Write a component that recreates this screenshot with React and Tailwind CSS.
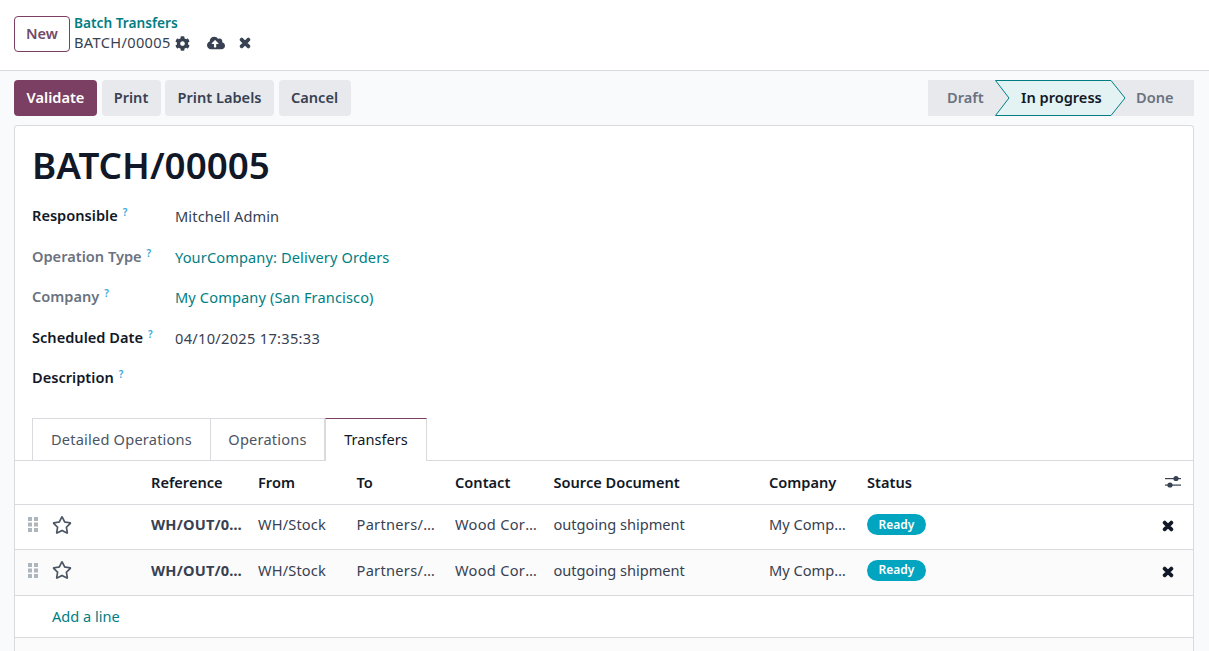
import React from "react";
import { FaCog, FaCloudUploadAlt, FaTimes, FaRegStar } from "react-icons/fa";

const grid = "grid grid-cols-[136px_107px_98.5px_98.5px_98.5px_215.5px_98px_1fr_50px] items-center";

const Help = () => (
  <sup className="relative -top-[5px] ml-[5px] text-[10px] font-semibold text-[#38a9d6]">?</sup>
);

function Field({ label, muted, value, link, wide }) {
  return (
    <div className="flex h-[40.6px] items-start pl-[17px]">
      <div className={`w-[143px] shrink-0 font-semibold ${muted ? "text-[#6b7280]" : "text-[#111827]"}`}>
        {label}
        <Help />
      </div>
      <div className={`pt-[1px] ${wide ? "tracking-[0.3px]" : "tracking-[0.12px]"} ${link ? "text-[#017e84]" : "text-[#374151]"}`}>{value}</div>
    </div>
  );
}

function Row({ alt, h }) {
  return (
    <div className={`${grid} border-b border-[#d8dadd] pb-[4px] ${alt ? "bg-[#fbfbfb]" : "bg-white"} ${h}`}>
      <div className="flex items-center gap-[14px] pl-[13px]">
        <svg width="10" height="15" viewBox="0 0 10 15" className="text-[#adb5bd]" fill="currentColor">
          <rect x="0" y="0" width="4" height="4" /><rect x="6" y="0" width="4" height="4" />
          <rect x="0" y="5.5" width="4" height="4" /><rect x="6" y="5.5" width="4" height="4" />
          <rect x="0" y="11" width="4" height="4" /><rect x="6" y="11" width="4" height="4" />
        </svg>
        <FaRegStar className="text-[20px] text-[#4b5563]" />
      </div>
      <div className="truncate pr-[14px] font-bold tracking-[0.2px] text-[#374151]">WH/OUT/00005</div>
      <div className="truncate pr-2 tracking-[0.15px]">WH/Stock</div>
      <div className="truncate pr-[15px] tracking-[0.3px]">Partners/Customers</div>
      <div className="truncate pr-[13px] tracking-[0.3px]">Wood Corner</div>
      <div className="truncate pr-2">outgoing shipment</div>
      <div className="truncate pr-[18px]">My Company</div>
      <div className="-mt-[2px]">
        <span className="inline-flex h-[21px] w-[59px] items-center justify-center rounded-full bg-[#01a5c0] text-xs font-semibold text-white">Ready</span>
      </div>
      <div className="mt-[3px] flex justify-end pr-[18px]">
        <FaTimes className="text-[14px] text-[#111827]" stroke="currentColor" strokeWidth="40" />
      </div>
    </div>
  );
}

export default function App() {
  return (
    <div className="h-[651px] w-[1209px] overflow-hidden bg-[#f9fafb] font-['Noto_Sans',sans-serif] text-[14.6px] text-[#374151]">
      <header className="flex h-[71px] items-start border-b border-[#d8dadd] bg-white pl-[14px] pt-[16px]">
        <button className="h-[36px] w-[56px] rounded border border-[#7b3f63] font-semibold text-[#714b67]">New</button>
        <div className="-mt-[3px] ml-[4px]">
          <div className="text-[13.7px] font-semibold leading-[20px] text-[#017e84]">Batch Transfers</div>
          <div className="flex h-[20px] items-center text-[#374151]">
            <span className="tracking-[0.35px]">BATCH/00005</span>
            <FaCog className="ml-[4px] text-[15px]" />
            <FaCloudUploadAlt className="ml-[17px] text-[18px]" />
            <FaTimes className="ml-[13px] text-[14px]" stroke="currentColor" strokeWidth="40" />
          </div>
        </div>
      </header>

      <div className="flex h-[54px] items-center justify-between pl-[14px] pr-[15px]">
        <div className="flex gap-[4.5px] font-semibold">
          <button className="h-[36px] w-[83px] rounded bg-[#7b3f63] text-white">Validate</button>
          <button className="h-[36px] w-[59px] rounded bg-[#e7e9ed]">Print</button>
          <button className="h-[36px] w-[109px] rounded bg-[#e7e9ed]">Print Labels</button>
          <button className="h-[36px] w-[72px] rounded bg-[#e7e9ed]">Cancel</button>
        </div>
        <div className="relative flex h-[36px] w-[266px] items-center bg-[#e7e9ed] font-semibold text-[#6b7280]">
          <svg className="absolute left-[67px] top-0" width="131" height="36" viewBox="0 0 131 36">
            <path d="M0.5 0.5H116L130 18L116 35.5H0.5L14 18Z" fill="#e3f3f4" stroke="#017e84" />
          </svg>
          <span className="relative w-[93px] pl-[19px]">Draft</span>
          <span className="relative w-[115px] text-[#111827]">In progress</span>
          <span className="relative">Done</span>
        </div>
      </div>

      <main className="ml-[14px] h-[540px] w-[1180px] rounded-t border border-b-0 border-[#d8dadd] bg-white">
        <h1 className="pl-[17px] pt-[15px] text-[36.8px] font-semibold leading-[48px] text-[#111827]">BATCH/00005</h1>
        <div className="mt-[16px]">
          <Field label="Responsible" value="Mitchell Admin" />
          <Field label="Operation Type" muted link value="YourCompany: Delivery Orders" />
          <Field label="Company" muted link value="My Company (San Francisco)" />
          <Field label="Scheduled Date" wide value="04/10/2025 17:35:33" />
          <Field label="Description" value="" />
        </div>

        <div className="mt-[10px] flex h-[43px] border-b border-[#d8dadd] pl-[17px]">
          <div className="flex h-[42px] w-[179px] items-center justify-center border border-b-0 border-[#d8dadd] tracking-[0.2px] text-[#4b5563]">Detailed Operations</div>
          <div className="flex h-[42px] w-[114px] items-center justify-center border-r border-t border-[#d8dadd] tracking-[0.2px] text-[#4b5563]">Operations</div>
          <div className="flex h-[43px] w-[102px] items-center justify-center border-x border-t border-x-[#d8dadd] border-t-[#7b3f63] bg-white text-[#111827]">Transfers</div>
        </div>

        <div className={`${grid} h-[44px] border-b border-[#d8dadd] font-semibold text-[#111827]`}>
          <div />
          <div>Reference</div>
          <div>From</div>
          <div>To</div>
          <div>Contact</div>
          <div>Source Document</div>
          <div>Company</div>
          <div>Status</div>
          <div className="flex justify-end pr-[12px]">
            <svg width="16" height="14" viewBox="0 0 16 14" fill="#374151">
              <rect x="0" y="3" width="16" height="1.2" />
              <circle cx="11" cy="3.5" r="2.6" />
              <rect x="0" y="9.5" width="16" height="1.2" />
              <circle cx="5" cy="10" r="2.6" />
            </svg>
          </div>
        </div>
        <Row h="h-[45px]" />
        <Row alt h="h-[46px]" />
        <div className="flex h-[42px] items-center border-b border-[#d8dadd] pl-[37px] text-[#017e84]">Add a line</div>
        <div className="h-[20px] bg-[#fbfbfb]" />
      </main>
    </div>
  );
}
